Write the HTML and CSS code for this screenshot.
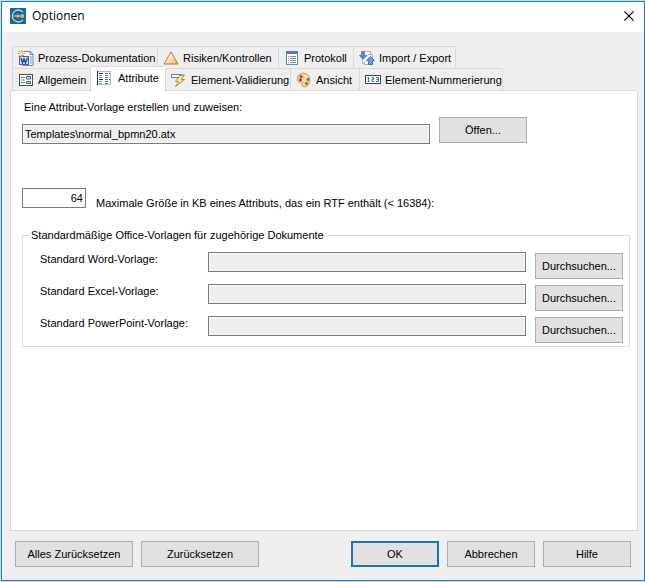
FILE: index.html
```html
<!DOCTYPE html>
<html lang="de">
<head>
<meta charset="utf-8">
<title>Optionen</title>
<link rel="stylesheet" href="styles.css">
</head>
<body>
<div class="window">
  <header class="titlebar">
    <svg class="app-icon" viewBox="0 0 16 16" aria-hidden="true">
      <rect width="16" height="16" fill="#12689f"/>
      <path d="M13 4.2A6 6 0 1 0 13 11.8" fill="none" stroke="#b9d9ec" stroke-width="1.3"/>
      <path d="M3.500 7.300H7V5.500L10 8 7 10.500V8.700H3.500z" fill="#e9b13c"/>
      <path d="M9 7.400h3v1.300H9z" fill="#e9b13c"/>
      <circle cx="12.300" cy="8" r="2" fill="#e9b13c"/>
    </svg>
    <h1 class="title">Optionen</h1>
    <button class="close" type="button" aria-label="Schließen">
      <svg viewBox="0 0 10 10"><path d="M.4.4l9.200 9.200M9.600.4L.4 9.600" stroke="#000" stroke-width="1.200"/></svg>
    </button>
  </header>

  <main class="content">
    <div class="tabs" role="tablist">
      <div class="tab-row tab-row-back">
        <button class="tab" type="button" role="tab">
          <svg viewBox="0 0 16 16">
            <path d="M4.500 1.500h8l2.500 2.500v11.500H4.500z" fill="#f4f8ff" stroke="#7088b8"/>
            <path d="M12 1.500V4.500h3" fill="#c8d8f0" stroke="#7088b8"/>
            <path d="M12 7h2M12 9h2M12 11h2M12 13h2" stroke="#7c9cd4"/>
            <rect x="1.500" y="6.500" width="9" height="8" fill="#dce8fa" stroke="#3c64ac"/>
            <path d="M3 8l1.500 5L6 9l1.500 4L9.500 8" fill="none" stroke="#1d479b" stroke-width="1.500"/>
            <path d="M3.500 0v7M0 3.500h7M1 1l5 5M6 1L1 6" stroke="#f0a62a"/>
            <circle cx="3.500" cy="3.500" r="1.500" fill="#fff0a0"/>
          </svg>
          <span>Prozess-Dokumentation</span>
        </button>
        <button class="tab" type="button" role="tab">
          <svg viewBox="0 0 16 16">
            <defs><linearGradient id="warn" x2="1" y2="1"><stop offset=".3" stop-color="#fff3dc"/><stop offset="1" stop-color="#eeb264"/></linearGradient></defs>
            <path d="M8 1.800L15 14H1z" fill="url(#warn)" stroke="#b57a3e" stroke-linejoin="round"/>
          </svg>
          <span>Risiken/Kontrollen</span>
        </button>
        <button class="tab" type="button" role="tab">
          <svg viewBox="0 0 16 16">
            <rect x="2.500" y="1.500" width="11" height="13" fill="#fff" stroke="#7084b0"/>
            <path d="M2 1h12v3H2z" fill="#4f79d0"/>
            <path d="M4 6.500h1M6 6.500h6M4 8.500h1M6 8.500h6M4 10.500h1M6 10.500h6M4 12.500h1M6 12.500h6" stroke="#7c8aa8"/>
          </svg>
          <span>Protokoll</span>
        </button>
        <button class="tab" type="button" role="tab">
          <svg viewBox="0 0 16 16">
            <path d="M3.500 1.500h8v12h-8z" fill="#fff" stroke="#a5b1c4"/>
            <path d="M9.500 4.500h4v10h-8v-3" fill="#f2f5fa" stroke="#a5b1c4"/>
            <path d="M2.500 1.500h3v4H8L4 9.500 0.500 5.500h2z" fill="#4c86e8" stroke="#5c84d0"/>
            <path d="M11.500 6.500L15.500 10.500h-2v4h-4v-4h-2z" fill="#649af0" stroke="#4a72c4"/>
          </svg>
          <span>Import / Export</span>
        </button>
      </div>
      <div class="tab-row tab-row-front">
        <button class="tab" type="button" role="tab">
          <svg viewBox="0 0 16 16">
            <rect x="1.500" y="2.500" width="13" height="11" fill="#fff" stroke="#45506a"/>
            <path d="M3 5.500h4M3 8h4M3 10.500h4" stroke="#6c7894"/>
            <path d="M8.500 4.500h4v2.500h-4zM8.500 9.500h4v2h-4z" fill="#cbd8ef" stroke="#45608f"/>
          </svg>
          <span>Allgemein</span>
        </button>
        <button class="tab tab-active" type="button" role="tab" aria-selected="true">
          <svg viewBox="0 0 16 16">
            <rect x="1.500" y="1.500" width="13" height="13" fill="#fff" stroke="#b2bccb"/>
            <path d="M1.500 1v14" stroke="#303848"/>
            <path d="M3 3.500h4M3 9.500h4" stroke="#303848"/>
            <path d="M3 5.500h3M3 7.500h3M3 11.500h3M3 13.500h3" stroke="#909bad"/>
            <path d="M9 3.500h5M9 5.500h4M9 7.500h4M9 9.500h5M9 11.500h4M9 13.500h4" stroke="#4472cc" stroke-dasharray="3 1"/>
          </svg>
          <span>Attribute</span>
        </button>
        <button class="tab" type="button" role="tab">
          <svg viewBox="0 0 16 16">
            <path d="M.5 2.500h10v3H.5z" fill="#fff" stroke="#5878bc"/>
            <path d="M11 3h2.500" fill="none" stroke="#5878bc"/>
            <path d="M8.500 3.500h4.500L10.500 7.500h3L4.500 14.500 7.500 9.500h-3z" fill="#ffe28a" stroke="#b98a3e" stroke-linejoin="round"/>
          </svg>
          <span>Element-Validierung</span>
        </button>
        <button class="tab" type="button" role="tab">
          <svg viewBox="0 0 16 16">
            <path d="M2 4C4 1 9 0 12 3c3 3 2 9-1 11-3 2-6 0-5-2 0-2-2-1-3-2C1 9 1 6 2 4z" fill="#f8d088" stroke="#cf9850"/>
            <circle cx="5" cy="4.500" r="1.500" fill="#d43a28"/><circle cx="9.500" cy="4" r="1.500" fill="#fff3b4"/>
            <circle cx="12" cy="7.500" r="1.400" fill="#3878cc"/><circle cx="4.500" cy="8" r="1.400" fill="#a43424"/>
            <circle cx="10.500" cy="11.500" r="1.500" fill="#3d9d3e"/><circle cx="7.500" cy="8" r="1.100" fill="#fff"/>
          </svg>
          <span>Ansicht</span>
        </button>
        <button class="tab" type="button" role="tab">
          <svg viewBox="0 0 16 16">
            <rect x=".5" y="3.500" width="15" height="8" fill="#fff" stroke="#3a4254"/>
            <path d="M3.500 5v5M2.500 5.500h1M2.500 9.500h2M6.500 5.500h2v2h-1.500v2h2M11 5.500h2.500v4H11M11.500 7.500h2" fill="none" stroke="#3a69c8"/>
          </svg>
          <span>Element-Nummerierung</span>
        </button>
      </div>
    </div>

    <section class="panel" role="tabpanel">
      <label class="caption" for="template">Eine Attribut-Vorlage erstellen und zuweisen:</label>
      <div class="template-row">
        <input class="field" id="template" type="text" value="Templates\normal_bpmn20.atx" readonly>
        <button class="button" type="button">Öffen...</button>
      </div>
      <div class="size-row">
        <input class="field field-number" id="size" type="text" value="64">
        <label for="size">Maximale Größe in KB eines Attributs, das ein RTF enthält (&lt; 16384):</label>
      </div>
      <fieldset class="group">
        <legend>Standardmäßige Office-Vorlagen für zugehörige Dokumente</legend>
        <div class="group-row">
          <label for="word">Standard Word-Vorlage:</label>
          <input class="field" id="word" type="text" readonly>
          <button class="button" type="button">Durchsuchen...</button>
        </div>
        <div class="group-row">
          <label for="excel">Standard Excel-Vorlage:</label>
          <input class="field" id="excel" type="text" readonly>
          <button class="button" type="button">Durchsuchen...</button>
        </div>
        <div class="group-row">
          <label for="powerpoint">Standard PowerPoint-Vorlage:</label>
          <input class="field" id="powerpoint" type="text" readonly>
          <button class="button" type="button">Durchsuchen...</button>
        </div>
      </fieldset>
    </section>
  </main>

  <footer class="actions">
    <button class="button button-wide" type="button">Alles Zurücksetzen</button>
    <button class="button button-wide" type="button">Zurücksetzen</button>
    <button class="button button-default" type="button">OK</button>
    <button class="button" type="button">Abbrechen</button>
    <button class="button" type="button">Hilfe</button>
  </footer>
</div>
</body>
</html>
```
FILE: styles.css
```css
* {
  box-sizing: border-box;
}

body {
  display: flex;
  min-height: 100vh;
  margin: 0;
  padding: 1px 0 1px 1px;
  background: #b5e0f7;
  color: #000;
  font-family: "Liberation Sans", Arial, sans-serif;
  font-size: 11px;
  line-height: 16px;
}

button,
input {
  margin: 0;
  color: inherit;
  font: inherit;
}

.window {
  display: flex;
  flex: 1;
  flex-direction: column;
  border: 1px solid #2a7ab8;
  background: #efefef;
}

.titlebar {
  display: flex;
  align-items: center;
  gap: 6px;
  height: 30px;
  padding: 0 10px 2px 8px;
  background: #fff;
}

.app-icon {
  width: 16px;
  height: 16px;
}

.title {
  flex: 1;
  margin: 0;
  font-family: "Open Sans", "Noto Sans", sans-serif;
  font-size: 12px;
  font-weight: 400;
}

.close {
  display: flex;
  padding: 0;
  border: 0;
  background: none;
}

.close svg {
  width: 10px;
  height: 10px;
}

.content {
  display: flex;
  flex: 1;
  flex-direction: column;
  padding: 14px 6px 0 8px;
}

.tabs {
  padding-left: 2px;
}

.tab-row {
  display: grid;
  justify-content: start;
  height: 22px;
}

.tab-row-back {
  grid-template-columns: 145px 121px 75px 103px;
}

.tab-row-front {
  grid-template-columns: 78px 75px 125px 69px 144px;
}

.tab {
  display: flex;
  align-items: center;
  gap: 4px;
  padding: 0 0 0 5px;
  border: 1px solid #d9d9d9;
  border-width: 1px 0 0 1px;
  background: #efefef;
  white-space: nowrap;
}

.tab:last-child {
  border-right-width: 1px;
}

.tab svg {
  flex: none;
  width: 16px;
  height: 16px;
}

.tab-active {
  z-index: 1;
  gap: 6px;
  margin: -2px 0 -1px;
  padding-bottom: 3px;
  background: #fff;
}

.panel {
  flex: 1;
  padding: 8px 7px 8px 11px;
  border: 1px solid #d9d9d9;
  background: #fff;
}

.caption {
  display: block;
  padding-left: 2px;
}

.template-row {
  display: flex;
  align-items: flex-start;
  gap: 9px;
  margin-top: 2px;
  padding-right: 103px;
}

.template-row .field {
  margin-top: 7px;
}

.field {
  flex: 1;
  min-width: 0;
  height: 20px;
  padding: 0 2px;
  border: 1px solid #7a7a7a;
  border-radius: 0;
  background: #fff;
}

.field:read-only {
  background: #efefef;
  box-shadow: inset 0 0 0 1px #f8f8f8;
}

.button {
  width: 88px;
  height: 26px;
  padding: 0;
  border: 1px solid #adadad;
  border-radius: 0;
  background: #e1e1e1;
}

.size-row {
  display: flex;
  align-items: flex-start;
  gap: 10px;
  margin-top: 44px;
}

.size-row label {
  padding-top: 7px;
}

.field-number {
  flex: none;
  width: 64px;
  text-align: right;
}

.group {
  margin: 16px 0 0;
  padding: 7px 6px 0 17px;
  border: 1px solid #dcdcdc;
}

.group legend {
  margin-left: -11px;
  padding: 0 2px;
}

.group-row {
  display: grid;
  grid-template-columns: 159px 1fr 88px;
  column-gap: 9px;
  height: 32px;
  white-space: nowrap;
}

.group-row label {
  margin-top: 1px;
}

.group-row .field {
  margin-top: 2px;
}

.group-row .button {
  margin-top: 3px;
}

.actions {
  display: flex;
  gap: 8px;
  padding: 10px 13px 13px;
}

.button-wide {
  width: 118px;
}

.button-default {
  margin-left: auto;
  border: 2px solid #1b74ba;
}
```
